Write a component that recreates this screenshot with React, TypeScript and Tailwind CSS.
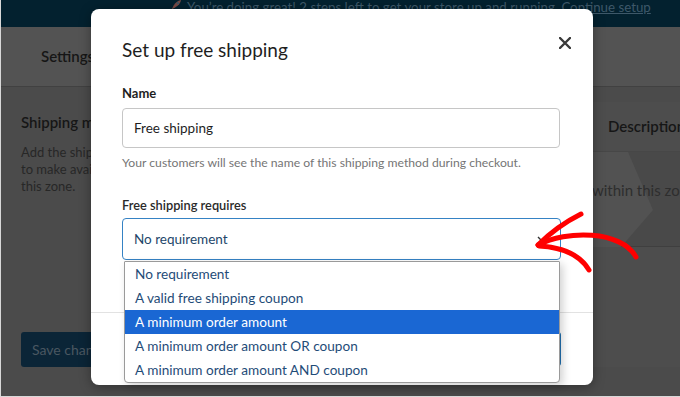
import React from "react";

const font = { fontFamily: "Lato, 'Noto Sans', 'Liberation Sans', sans-serif" };

function ChevronShape() {
  return (
    <svg className="absolute inset-0" width="90" height="95" viewBox="0 0 90 95">
      <polygon points="0,0 38,0 63,58 31,95 0,95" fill="#525252" />
    </svg>
  );
}

export default function App() {
  const options = [
    "No requirement",
    "A valid free shipping coupon",
    "A minimum order amount",
    "A minimum order amount OR coupon",
    "A minimum order amount AND coupon",
  ];
  return (
    <div
      className="relative w-[680px] h-[397px] overflow-hidden bg-[#4b4b4b] border-l border-b border-[#d8d8d8] flex flex-col"
      style={font}
    >
      {/* Banner */}
      <div className="h-[27px] bg-[#03212f] flex items-start shrink-0">
        <div className="flex items-start gap-[5px] pl-[168px] -mt-[1px] text-[13.3px] leading-[16px] text-[#3e5869] whitespace-nowrap">
          <svg width="13" height="13" viewBox="0 0 14 14">
            <path d="M3 11 L5 7 Q8 2 13 1 Q12 6 7 9 Z" fill="#7a4a45" />
            <circle cx="9.5" cy="4.5" r="1.2" fill="#3e5869" />
          </svg>
          <span>
            You’re doing great! 2 steps left to get your store up and running.{" "}
            <span className="underline">Continue setup</span>
          </span>
        </div>
      </div>

      {/* Header */}
      <div className="h-[60px] bg-[#535353] border-b border-[#414141] flex items-center pl-[40px] shrink-0">
        <span className="text-[15px] font-semibold text-[#161616]">Settings</span>
      </div>

      {/* Body */}
      <div className="flex pt-[15px]">
        <div className="w-[280px] pl-[20px] pr-[20px] pt-[10px] shrink-0 flex flex-col">
          <div className="text-[15px] font-semibold text-[#161616] leading-[20px]">
            Shipping methods
          </div>
          <div className="mt-[12px] text-[13px] leading-[17px] text-[#272727] flex flex-col whitespace-nowrap">
            <span>Add the shipping methods you'd like</span>
            <span>to make available to customers in</span>
            <span>this zone.</span>
          </div>
          <div className="mt-[137px] h-[35px] w-[120px] rounded-[3px] bg-[#0b2537] flex items-center pl-[11px] text-[14px] text-[#4a5761]">
            Save changes
          </div>
        </div>
        <div className="flex-1 flex flex-col bg-[#4d4d4d]">
          <div className="h-[50px] flex items-center border-b border-[#474747] justify-end">
            <span className="text-[15px] font-semibold text-[#161616] w-[72px]">Description</span>
          </div>
          <div className="relative h-[95px] bg-[#494949] border-b border-[#3f3f3f]">
            <div className="absolute right-0 top-0 w-[90px] h-[95px]">
              <ChevronShape />
            </div>
            <div className="relative h-full flex items-center justify-end text-[15px] text-[#2e2e2e] whitespace-nowrap overflow-hidden">
              <span className="-mr-[16px] mb-[18px]">You can add multiple shipping methods within this zone</span>
            </div>
          </div>
        </div>
      </div>

      {/* Modal */}
      <div className="absolute left-[90px] top-[9px] w-[502px] h-[376px] bg-white rounded-[8px] shadow-[0_2px_12px_rgba(0,0,0,0.35)] flex flex-col">
        <div className="relative h-[303px] px-[31px] pt-[27px] flex flex-col">
          <div className="text-[19px] leading-[28px] text-[#1e1e1e]">Set up free shipping</div>
          <svg
            className="absolute right-[22px] top-[28px]"
            width="12"
            height="12"
            viewBox="0 0 12 12"
          >
            <path d="M1 1 L11 11 M11 1 L1 11" stroke="#3a3a3a" strokeWidth="2.4" strokeLinecap="round" />
          </svg>

          <div className="mt-[20px] text-[13px] leading-[18px] font-bold text-[#1e1e1e]">Name</div>
          <div className="mt-[6px] h-[40px] w-[438px] border border-[#c6c6c6] rounded-[4px] flex items-center pl-[11px] text-[13.5px] text-[#1e1e1e]">
            Free shipping
          </div>
          <div className="mt-[6px] text-[12.2px] leading-[18px] text-[#757575]">
            Your customers will see the name of this shipping method during checkout.
          </div>

          <div className="mt-[24px] text-[12.8px] leading-[18px] font-semibold text-[#2a2a2a]">
            Free shipping requires
          </div>
          <div className="mt-[4px] h-[42px] w-[439px] border border-[#3582c4] rounded-[4px] flex items-center justify-between pl-[11px] pr-[14px] text-[13.5px] text-[#22466a]">
            <span>No requirement</span>
            <svg width="9" height="6" viewBox="0 0 9 6">
              <path d="M1 1 L4.5 4.5 L8 1" stroke="#333" strokeWidth="1.4" fill="none" />
            </svg>
          </div>

          {/* Dropdown list */}
          <div className="absolute left-[33px] top-[252px] w-[436px] z-10 bg-white border border-[#9a9a9a] rounded-b-[4px] rounded-t-[1px] shadow-[3px_3px_8px_rgba(0,0,0,0.18)] flex flex-col">
            {options.map((o, i) => (
              <div
                key={o}
                className={
                  i === 2
                    ? "h-[24px] flex items-center pl-[10px] text-[13.6px] bg-[#1a67d3] text-white"
                    : "h-[24px] flex items-center pl-[10px] text-[13.6px] text-[#1f4c78]"
                }
              >
                {o}
              </div>
            ))}
          </div>
        </div>
        <div className="flex-1 border-t border-[#e2e2e2] flex items-center justify-end pr-[32px]">
          <div className="h-[34px] px-[14px] rounded-[3px] bg-[#2271b1] text-white text-[14px] flex items-center">
            Create and save
          </div>
        </div>
      </div>

      {/* Red arrow annotation */}
      <svg className="absolute inset-0 pointer-events-none" width="680" height="397" viewBox="0 0 680 397">
        <g stroke="#ff0000" strokeWidth="5" strokeLinecap="round" fill="none">
          <path d="M537 245 C 565 230, 620 230, 635 257" />
          <path d="M537 245 Q 556 226, 580 214" />
          <path d="M538 246 Q 575 248, 588 270" />
        </g>
      </svg>
    </div>
  );
}
